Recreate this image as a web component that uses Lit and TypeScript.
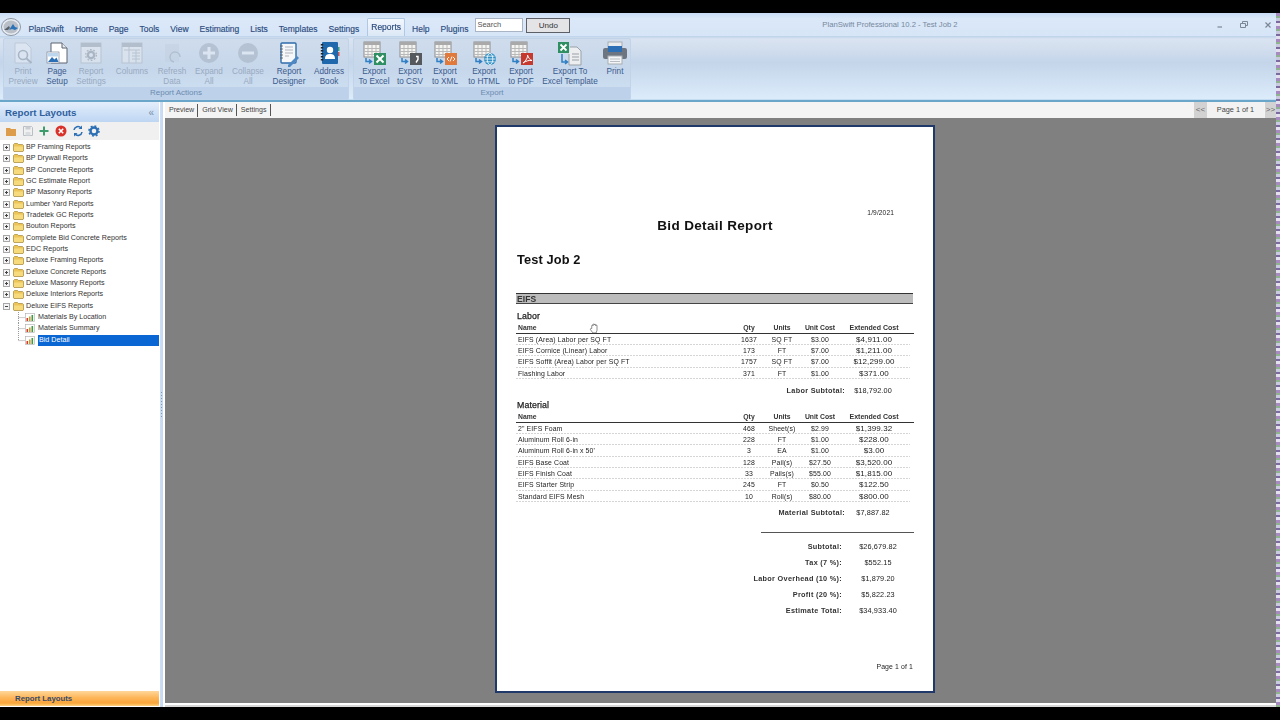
import { LitElement, html, css, svg } from "lit";
import { customElement } from "lit/decorators.js";

const grid = svg`<rect x="3" y="1" width="16" height="15" fill="#f4f4f2" stroke="#8e8e8e"/><rect x="3" y="1" width="16" height="3" fill="#a9a9a9"/><path d="M3 7.5h16M3 10.5h16M3 13.5h16M7 4v12M11 4v12M15 4v12" stroke="#b9b9b9" fill="none"/><path d="M5 17v3.5h5M8 18.5l2.5 2-2.5 2" stroke="#2f7fc4" stroke-width="1.5" fill="none"/>`;
const exportIcon = (badge: unknown) => html`<svg viewBox="0 0 26 26" width="26" height="26">${grid}${badge}</svg>`;
const ICONS: Record<string, unknown> = {
  preview: html`<svg viewBox="0 0 26 26" width="26" height="26"><g opacity=".45"><path d="M5 2h11l5 5v15H5z" fill="#eef2f8" stroke="#aab4c2"/><circle cx="13" cy="14" r="4.5" fill="none" stroke="#7d8a9a" stroke-width="1.6"/><path d="M16.5 17.5l5 4.5" stroke="#7d8a9a" stroke-width="2"/></g></svg>`,
  setup: html`<svg viewBox="0 0 26 26" width="26" height="26"><path d="M7 2h11l5 5v15H7z" fill="#fff" stroke="#5d6470"/><path d="M18 2v5h5" fill="#e6e9ed" stroke="#5d6470"/><rect x="3" y="11" width="12" height="11" fill="#fff" stroke="#7b8798" stroke-width=".7"/><path d="M4 21l4-5 2.500 2.500 2-2 2 4.500z" fill="#2a6fb5"/><rect x="4" y="12" width="10" height="3.500" fill="#bcd6ee"/></svg>`,
  rsettings: html`<svg viewBox="0 0 26 26" width="26" height="26"><g opacity=".5"><rect x="3" y="2" width="20" height="20" fill="#e7ebf0" stroke="#a7afb9"/><rect x="3" y="2" width="20" height="4" fill="#9aa3ae"/><circle cx="13" cy="14" r="3.2" fill="none" stroke="#8b939e" stroke-width="2.4"/><circle cx="13" cy="14" r="5.4" fill="none" stroke="#8b939e" stroke-width="1.2" stroke-dasharray="1.7 1.7"/></g></svg>`,
  columns: html`<svg viewBox="0 0 26 26" width="26" height="26"><g opacity=".5"><rect x="3" y="2" width="20" height="20" fill="#e7ebf0" stroke="#a7afb9"/><rect x="3" y="2" width="20" height="4" fill="#9aa3ae"/><path d="M10 6v16M5 9h16M13 12h8M13 15h8M13 18h8M17 9v13" stroke="#a7afb9" fill="none"/></g></svg>`,
  refresh: html`<svg viewBox="0 0 26 26" width="26" height="26"><g opacity=".28"><rect x="6" y="3" width="14" height="18" fill="#bcc8d8"/><path d="M15 21a5 5 0 1 1 6-5" fill="none" stroke="#6f8296" stroke-width="1.5"/></g></svg>`,
  expand: html`<svg viewBox="0 0 26 26" width="26" height="26"><circle cx="13" cy="12" r="10" fill="#aebccd" opacity=".8"/><path d="M13 6v12M7 12h12" stroke="#dbe5f1" stroke-width="3"/></svg>`,
  collapse: html`<svg viewBox="0 0 26 26" width="26" height="26"><circle cx="13" cy="12" r="10" fill="#aebccd" opacity=".8"/><path d="M7 12h12" stroke="#dbe5f1" stroke-width="3"/></svg>`,
  designer: html`<svg viewBox="0 0 26 26" width="26" height="26"><rect x="5" y="2" width="15" height="20" rx="1" fill="#f6f7f9" stroke="#2f6cab" stroke-width="1.400"/><path d="M4 5h3M4 8h3M4 11h3M4 14h3M4 17h3" stroke="#555" stroke-width=".8"/><path d="M9 6h8M9 9h8M9 12h8M9 15h4" stroke="#aeb6c0" stroke-width="1.200"/><path d="M12 24l9-9 2 2-9 9h-2z" fill="#4c87c4"/></svg>`,
  address: html`<svg viewBox="0 0 26 26" width="26" height="26"><rect x="6" y="1" width="16" height="22" rx="1" fill="#1f68ac"/><path d="M6 3v18" stroke="#222" stroke-width="2.400" stroke-dasharray="1.500 1.500"/><circle cx="14" cy="9" r="3.200" fill="#fff"/><path d="M9 18c0-4 2-5 5-5s5 1 5 5z" fill="#fff"/><rect x="22" y="6" width="1.500" height="4" fill="#3aa07a"/><rect x="22" y="11" width="1.500" height="4" fill="#c55"/></svg>`,
  excel: exportIcon(svg`<rect x="13" y="12" width="12" height="12" fill="#2f8f63"/><path d="M15.5 14.5l7 7M22.5 14.5l-7 7" stroke="#fff" stroke-width="2"/>`),
  csv: exportIcon(svg`<rect x="13" y="12" width="12" height="12" fill="#55585c"/><path d="M19 15.5h2v3l-2 3" stroke="#fff" stroke-width="1.4" fill="none"/>`),
  xml: exportIcon(svg`<rect x="13" y="12" width="12" height="12" fill="#e07a3c"/><path d="M17 16l-2 2 2 2M21 16l2 2-2 2M20 15.5l-2 5" stroke="#fff" stroke-width=".9" fill="none"/>`),
  htmlx: exportIcon(svg`<circle cx="19" cy="18" r="6" fill="#2f8fc4"/><ellipse cx="19" cy="18" rx="2.8" ry="5.6" fill="none" stroke="#fff" stroke-width=".8"/><path d="M13.5 18h11M14.5 15.2h9M14.5 20.8h9" stroke="#fff" stroke-width=".8"/>`),
  pdf: exportIcon(svg`<rect x="13" y="12" width="12" height="12" fill="#c5392e"/><path d="M15 22c3-2 5-6 4.5-8 1 3 2.500 5 4.500 5.500-3-.5-6 .5-9 2.500z" fill="none" stroke="#fff" stroke-width="1"/>`),
  template: html`<svg viewBox="0 0 26 26" width="26" height="26"><rect x="1" y="1" width="11" height="11" fill="#2f8f63"/><path d="M3.500 3.500l6 6M9.500 3.500l-6 6" stroke="#fff" stroke-width="1.800"/><path d="M13 6h7l4 4v14H12V13" fill="#eceef0" stroke="#9aa1a9"/><path d="M15 13h7M15 16h7M15 19h7" stroke="#9aa1a9"/><path d="M5 13v8h5M8 19l2.500 2L8 23" stroke="#2f7fc4" stroke-width="1.500" fill="none"/></svg>`,
  print: html`<svg viewBox="0 0 26 26" width="26" height="26"><rect x="6" y="1" width="14" height="7" fill="#e9ecef" stroke="#a8adb3"/><rect x="1" y="7" width="24" height="11" rx="2" fill="#6d7680"/><rect x="6" y="5" width="14" height="6" fill="#2d6fb4"/><rect x="6" y="15" width="14" height="8" fill="#f4f5f6" stroke="#a8adb3"/><path d="M8 18h10M8 20.500h10" stroke="#b7bcc2"/></svg>`,
};

type Btn = { a: string; b?: string; i: string; w: number; off?: boolean };
const ACTIONS: Btn[] = [
  { a: "Print", b: "Preview", i: "preview", w: 36, off: true },
  { a: "Page", b: "Setup", i: "setup", w: 32 },
  { a: "Report", b: "Settings", i: "rsettings", w: 36, off: true },
  { a: "Columns", i: "columns", w: 46, off: true },
  { a: "Refresh", b: "Data", i: "refresh", w: 34, off: true },
  { a: "Expand", b: "All", i: "expand", w: 40, off: true },
  { a: "Collapse", b: "All", i: "collapse", w: 38, off: true },
  { a: "Report", b: "Designer", i: "designer", w: 44 },
  { a: "Address", b: "Book", i: "address", w: 36 },
];
const EXPORTS: Btn[] = [
  { a: "Export", b: "To Excel", i: "excel", w: 36 },
  { a: "Export", b: "to CSV", i: "csv", w: 36 },
  { a: "Export", b: "to XML", i: "xml", w: 34 },
  { a: "Export", b: "to HTML", i: "htmlx", w: 44 },
  { a: "Export", b: "to PDF", i: "pdf", w: 30 },
  { a: "Export To", b: "Excel Template", i: "template", w: 68 },
  { a: "Print", i: "print", w: 22 },
];
const TABS = ["Home", "Page", "Tools", "View", "Estimating", "Lists", "Templates", "Settings"];
const FOLDERS = ["BP Framing Reports", "BP Drywall Reports", "BP Concrete Reports", "GC Estimate Report", "BP Masonry Reports", "Lumber Yard Reports", "Tradetek GC Reports", "Bouton Reports", "Complete Bid Concrete Reports", "EDC Reports", "Deluxe Framing Reports", "Deluxe Concrete Reports", "Deluxe Masonry Reports", "Deluxe Interiors Reports"];
const LABOR = [
  ["EIFS (Area) Labor per SQ FT", "1637", "SQ FT", "$3.00", "$4,911.00"],
  ["EIFS Cornice (Linear) Labor", "173", "FT", "$7.00", "$1,211.00"],
  ["EIFS Soffit (Area) Labor per SQ FT", "1757", "SQ FT", "$7.00", "$12,299.00"],
  ["Flashing Labor", "371", "FT", "$1.00", "$371.00"],
];
const MATERIAL = [
  ['2" EIFS Foam', "468", "Sheet(s)", "$2.99", "$1,399.32"],
  ["Aluminum Roll 6-in", "228", "FT", "$1.00", "$228.00"],
  ["Aluminum Roll 6-in x 50'", "3", "EA", "$1.00", "$3.00"],
  ["EIFS Base Coat", "128", "Pail(s)", "$27.50", "$3,520.00"],
  ["EIFS Finish Coat", "33", "Pails(s)", "$55.00", "$1,815.00"],
  ["EIFS Starter Strip", "245", "FT", "$0.50", "$122.50"],
  ["Standard EIFS Mesh", "10", "Roll(s)", "$80.00", "$800.00"],
];
const SUMMARY = [
  ["Subtotal:", "$26,679.82"],
  ["Tax (7 %):", "$552.15"],
  ["Labor Overhead (10 %):", "$1,879.20"],
  ["Profit (20 %):", "$5,822.23"],
  ["Estimate Total:", "$34,933.40"],
];

@customElement("app-root")
export class AppRoot extends LitElement {
  static styles = css`
    :host { display: block; width: 1280px; height: 720px; background: #000; overflow: hidden; font-family: "Liberation Sans", Arial, sans-serif; }
    .screen { display: flex; height: 694px; padding-top: 13px; box-sizing: content-box; filter: blur(.3px); }
    .win { width: 1276px; display: flex; flex-direction: column; background: #d6e4f5; }
    .noise { width: 4px; background: repeating-linear-gradient(180deg, #a78ac0 0 3px, #8fb38f 3px 5px, #c9c9e0 5px 8px, #7a6aa0 8px 10px, #e5e0f0 10px 13px); }
    .title { height: 23px; display: flex; align-items: flex-end; background: linear-gradient(#c9dcf4, #dbe8f8 25%, #d6e5f7); flex: none; }
    .left { width: 570px; display: flex; align-items: flex-end; flex: none; height: 23px; }
    .logo { width: 20px; height: 18px; margin: 0 0 0 1px; flex: none; align-self: flex-end; }
    .tabs { display: flex; align-items: flex-end; gap: 11px; margin-left: 7.500px; color: #2b4a7d; font-size: 8.500px; line-height: 11px; padding-bottom: 1px; flex: none; white-space: nowrap; }
    .tabs b { font-weight: normal; -webkit-text-stroke: .15px #2b4a7d; }
    .tab-on { margin: 0 -4px 0 -3px; height: 17px; padding: 0 3px; background: linear-gradient(#f2f7fd, #dce8f6); border: 1px solid #afc8e4; border-bottom: 0; border-radius: 2px 2px 0 0; position: relative; top: 1px; display: flex; align-items: center; }
    .search { width: 45px; height: 12px; margin: 0 3px 4px 7px; background: #fff; border: 1px solid #a9b4c4; font-size: 7.500px; line-height: 12px; color: #555; padding-left: 1px; flex: none; }
    .undo { width: 42px; height: 13px; margin-bottom: 3px; background: #e4e4e6; border: 1px solid #5d6066; font-size: 8px; line-height: 13px; text-align: center; color: #333; flex: none; }
    .ttl { flex: 1; text-align: center; font-size: 7.700px; line-height: 22px; color: #76879e; align-self: center; }
    .ctl { width: 66px; flex: none; display: flex; align-items: center; justify-content: space-between; height: 22px; padding: 0 4px 0 6px; box-sizing: border-box; }
    .ribbon { height: 66px; flex: none; padding: 2px 3px 0; box-sizing: border-box; display: flex; gap: 4px; background: linear-gradient(#bcd3e9 0, #d9e3f1 3px, #d5e0ef 10px, #c4d5ea 40%, #dcecfb 96%, #6aa6c9 97%, #6aa6c9 100%); }
    .group { height: 62px; display: flex; flex-direction: column; background: linear-gradient(#cfdcec, #c6d7eb 50%, #cfe1f3); border: 1px solid #c1d3e8; border-radius: 2px; box-sizing: border-box; }
    .g1 { width: 346px; }
    .g2 { width: 278px; }
    .btns { flex: 1; display: flex; padding-left: 1px; }
    .g2 .btns { padding-left: 2px; }
    .btn { display: flex; flex-direction: column; align-items: center; color: #3b5a8c; font-size: 8.200px; line-height: 10px; text-align: center; white-space: nowrap; flex: none; padding-top: 2px; }
    .btn svg { display: block; }
    .btn.off { color: #98a9bf; }
    .glabel { height: 12px; flex: none; background: #bdd2ea; color: #6c8ab0; font-size: 8px; line-height: 12px; text-align: center; }
    .body { flex: 1; display: flex; min-height: 0; background: #fff; }
    .side { width: 159px; flex: none; display: flex; flex-direction: column; background: #fff; }
    .shead { height: 20px; flex: none; display: flex; align-items: center; justify-content: space-between; padding: 0 5px; background: linear-gradient(#e3eefb, #bed6f3); color: #2f5f9e; font-weight: bold; font-size: 9.750px; }
    .shead span { color: #7a8ea8; font-weight: normal; font-size: 10px; }
    .tools { height: 18px; flex: none; background: #f0f0f0; display: flex; align-items: center; gap: 4.700px; padding-left: 5px; }
    .tools svg { display: block; flex: none; }
    .tree { flex: 1; padding-top: 2px; font-size: 7.150px; color: #333; }
    .node { height: 11.330px; line-height: 11.330px; display: flex; align-items: center; white-space: nowrap; }
    .pm { width: 7px; height: 7px; margin-left: 3px; flex: none; display: block; }
    .fold { width: 11px; height: 9px; margin: 0 2.500px; flex: none; display: block; }
    .leaf { padding-left: 6px; }
    .conn { width: 19px; height: 100%; flex: none; display: block; }
    .doc { width: 10px; height: 9px; margin: 0 3px 0 0; flex: none; display: block; }
    .sel-t { background: #0a66d2; color: #fff; flex: 1; height: 11px; line-height: 11px; padding-left: 1px; }
    .sfoot { height: 15px; flex: none; background: linear-gradient(#ffd79a, #fdb659 45%, #f9a53a 80%, #ffd27e); color: #374a6a; font-size: 7.800px; font-weight: bold; line-height: 15px; padding-left: 15px; margin-bottom: 1px; }
    .split { width: 6px; flex: none; display: flex; align-items: center; justify-content: center; background: linear-gradient(90deg, #fff 0, #fff 1px, #cfe0f5 1px, #c4d8f2 4px, #fff 4px); }
    .grip { width: 1px; height: 26px; margin: 0 2px 0 0; background: repeating-linear-gradient(180deg, #8298b5 0 1px, transparent 1px 3px); }
    .main { flex: 1; min-width: 0; display: flex; flex-direction: column; background: #f3f3f3; }
    .mtabs { height: 16px; flex: none; display: flex; align-items: center; background: #f4f4f4; font-size: 7.100px; color: #444; padding-left: 4px; }
    .mtabs span { padding: 0 3px 0 2px; border-right: 1px solid #555; line-height: 12px; margin-right: 2px; }
    .mtabs span:first-child { padding: 0 3px 1px 0; }
    .pager { margin-left: auto; display: flex; height: 16px; line-height: 16px; font-size: 7.300px; color: #444; text-align: center; }
    .pbtn { width: 13px; background: #d2d2d2; color: #666; font-size: 8px; }
    .pmid { width: 57px; background: #f2f2f2; margin-right: 1px; }
    .pager .last { width: 11px; white-space: nowrap; overflow: hidden; }
    .canvas { height: 585px; flex: none; background: #808080; padding: 7px 0 0 330px; box-sizing: border-box; }
    .paper { width: 440px; height: 568px; box-sizing: border-box; background: #fff; border: 2px solid #1f3a6a; padding: 81px 0 0 19px; position: relative; color: #222; font-size: 6.900px; letter-spacing: .12px; }
    .date { height: 10px; line-height: 10px; text-align: right; width: 378px; font-size: 6.600px; }
    .h1 { height: 16px; line-height: 16px; font-size: 13.500px; font-weight: bold; letter-spacing: .35px; text-align: center; color: #111; width: 398px; }
    .h2 { height: 16px; line-height: 16px; font-size: 12.800px; font-weight: bold; margin: 17.500px 0 0 1px; color: #111; }
    .wrap { width: 398px; }
    .band { height: 11px; margin-top: 25.500px; box-sizing: border-box; width: 397px; background: #bcbcbc; border-top: 1px solid #333; border-bottom: 1px solid #444; font-weight: bold; font-size: 8.500px; line-height: 10px; padding-left: 1px; color: #333; }
    .sec { height: 12px; line-height: 12px; font-size: 8.800px; padding-left: 1px; color: #222; letter-spacing: .1px; -webkit-text-stroke: .25px #222; }
    .s1 { margin-top: 6px; }
    .s2 { margin-top: 2px; }
    .row { display: grid; grid-template-columns: 216px 34px 32px 44px 64px; height: 11.330px; line-height: 11px; width: 394px; box-sizing: border-box; background-image: linear-gradient(90deg, #aaa 50%, transparent 50%); background-size: 3px 1px; background-repeat: repeat-x; background-position: bottom; }
    .row > span { text-align: center; white-space: nowrap; }
    .row > span:first-child { text-align: left; padding-left: 2px; }
    .row > span:last-child { font-size: 8px; }
    .head { width: 398px; background: none; border-bottom: 1px solid #333; height: 11.700px; font-weight: bold; letter-spacing: 0; font-size: 6.800px; color: #333; }
    .head > span:last-child { font-size: 7px; }
    .sub { display: grid; grid-template-columns: 329px 56px; height: 12px; line-height: 12px; font-size: 7.300px; }
    .sub b { text-align: right; letter-spacing: .3px; color: #333; }
    .sub span { text-align: center; }
    .m1 { margin-top: 6px; }
    .m2 { margin-top: 5.400px; }
    .rule { margin: 13px 0 0 245px; width: 153px; height: 1px; background: #555; }
    .summary { margin-top: 6px; }
    .sumrow { display: grid; grid-template-columns: 326px 72px; height: 16px; line-height: 16px; font-size: 7.300px; }
    .sumrow b { text-align: right; letter-spacing: .3px; color: #333; }
    .sumrow span { text-align: center; }
    .pg { margin-top: 43px; width: 397px; text-align: right; line-height: 10px; height: 10px; }
    .hand { position: absolute; left: 91.500px; top: 196px; width: 11px; height: 11px; }
    .foot { flex: 1; background: #fff; border-bottom: 2px solid #d8d8d8; box-sizing: border-box; }
  `;

  private row(r: string[], head = false) {
    return html`<div class="row ${head ? "head" : ""}">${r.map((c) => html`<span>${c}</span>`)}</div>`;
  }

  private toolIcons() {
    return html`
      <svg viewBox="0 0 12 12" width="12" height="12"><path d="M1 3h4l1 1h5v7H1z" fill="#dd9c4a"/></svg>
      <svg viewBox="0 0 12 12" width="12" height="12"><path d="M1.500 1.500h8l1 1v8h-9z" fill="none" stroke="#b9bec4"/><rect x="3.500" y="1.500" width="5" height="3" fill="#c9ced4"/><rect x="3.500" y="7" width="5" height="3.500" fill="#d9dde1"/></svg>
      <svg viewBox="0 0 12 12" width="12" height="12"><path d="M6 1.500v9M1.500 6h9" stroke="#3d9b6c" stroke-width="2"/></svg>
      <svg viewBox="0 0 12 12" width="12" height="12"><circle cx="6" cy="6" r="5.500" fill="#d8322a"/><path d="M3.800 3.800l4.400 4.400M8.200 3.800l-4.400 4.400" stroke="#fff" stroke-width="1.600"/></svg>
      <svg viewBox="0 0 12 12" width="12" height="12"><path d="M2 5a4 4 0 0 1 7-2M10 7a4 4 0 0 1-7 2" fill="none" stroke="#2d6fb4" stroke-width="1.600"/><path d="M10 .500v3.500H6.500zM2 11.500V8h3.500z" fill="#2d6fb4"/></svg>
      <svg viewBox="0 0 12 12" width="12" height="12"><circle cx="6" cy="6" r="3.500" fill="none" stroke="#2d6fb4" stroke-width="2.400"/><circle cx="6" cy="6" r="5" fill="none" stroke="#2d6fb4" stroke-width="1.600" stroke-dasharray="1.900 2"/></svg>`;
  }

  private pm(open: boolean) {
    return html`<svg class="pm" viewBox="0 0 7 7"><rect x=".5" y=".5" width="6" height="6" fill="#f4f4f4" stroke="#a8a8a8"/><path d="M2 3.500h3" stroke="#444"/>${open ? "" : svg`<path d="M3.500 2v3" stroke="#444"/>`}</svg>`;
  }
  private folder() {
    return html`<svg class="fold" viewBox="0 0 11 9"><path d="M.5 1.500L1.500.5h3l1 1h4l1 1v5.500l-.500.500H1l-.500-.500z" fill="#ecc458" stroke="#a58a3a" stroke-width=".7"/><path d="M1 3.500h9v4.500H1z" fill="#f7da7c"/></svg>`;
  }
  private leaf(t: string, sel = false, last = false) {
    return html`<div class="node leaf">
      <svg class="conn" viewBox="0 0 19 11.330" preserveAspectRatio="none"><path d="M12.500 0V${last ? "5.600" : "11.330"}M12.500 5.600H19" stroke="#999" stroke-dasharray="1 1" fill="none"/></svg>
      <svg class="doc" viewBox="0 0 10 9"><rect x=".5" y=".5" width="9" height="8" fill="#fff" stroke="#aaa" stroke-width=".6"/><rect x="1.500" y="5" width="1.600" height="3" fill="#d23a2a"/><rect x="4" y="3.500" width="1.600" height="4.500" fill="#d99a2a"/><rect x="6.500" y="2" width="1.600" height="6" fill="#3a9b46"/></svg>
      ${sel ? html`<span class="sel-t">${t}</span>` : html`<span>${t}</span>`}
    </div>`;
  }

  render() {
    const btn = (b: Btn) => html`<div class="btn ${b.off ? "off" : ""}" style="width:${b.w}px">${ICONS[b.i]}<span>${b.a}</span>${b.b ? html`<span>${b.b}</span>` : ""}</div>`;
    return html`
      <div class="screen">
        <div class="win">
          <div class="title">
            <div class="left">
              <svg class="logo" viewBox="0 0 20 18"><ellipse cx="10" cy="9" rx="9.500" ry="8.500" fill="#e9edf2" stroke="#8a96a5"/><ellipse cx="10" cy="9" rx="7.500" ry="6.500" fill="#b9bfc8"/><path d="M8 12l4-6 2 3 3 1-3 2-3-1z" fill="#2a72b8"/><path d="M3 12l5-4 1 2-2 2z" fill="#5a6068"/></svg>
              <div class="tabs"><b>PlanSwift</b>${TABS.map((t) => html`<b>${t}</b>`)}<b class="tab-on">Reports</b><b>Help</b><b>Plugins</b></div>
              <div class="search">Search</div>
              <div class="undo">Undo</div>
            </div>
            <div class="ttl">PlanSwift Professional 10.2 - Test Job 2</div>
            <div class="ctl">
              <svg viewBox="0 0 8 8" width="8" height="8"><path d="M1.500 6h4.500" stroke="#7b8797" stroke-width="1.200"/></svg>
              <svg viewBox="0 0 8 8" width="8" height="8"><path d="M.5 2.500h5v4h-5zM2.500 2.500v-2h5v4h-2" fill="none" stroke="#7b8797"/></svg>
              <svg viewBox="0 0 8 8" width="8" height="8"><path d="M1.500 1.500l5 5M6.500 1.500l-5 5" stroke="#7b8797" stroke-width="1.200"/></svg>
            </div>
          </div>
          <div class="ribbon">
            <div class="group g1"><div class="btns">${ACTIONS.map(btn)}</div><div class="glabel">Report Actions</div></div>
            <div class="group g2"><div class="btns">${EXPORTS.map(btn)}</div><div class="glabel">Export</div></div>
          </div>
          <div class="body">
            <div class="side">
              <div class="shead">Report Layouts<span>«</span></div>
              <div class="tools">${this.toolIcons()}</div>
              <div class="tree">
                ${FOLDERS.map((f) => html`<div class="node">${this.pm(false)}${this.folder()}<span>${f}</span></div>`)}
                <div class="node">${this.pm(true)}${this.folder()}<span>Deluxe EIFS Reports</span></div>
                ${this.leaf("Materials By Location")}
                ${this.leaf("Materials Summary")}
                ${this.leaf("Bid Detail", true, true)}
              </div>
              <div class="sfoot">Report Layouts</div>
            </div>
            <div class="split"><div class="grip"></div></div>
            <div class="main">
              <div class="mtabs">
                <span>Preview</span><span>Grid View</span><span>Settings</span>
                <div class="pager"><div class="pbtn">&lt;&lt;</div><div class="pmid">Page 1 of 1</div><div class="pbtn last">&gt;&gt;</div></div>
              </div>
              <div class="canvas">
                <div class="paper">
                  <div class="date">1/9/2021</div>
                  <div class="h1">Bid Detail Report</div>
                  <div class="h2">Test Job 2</div>
                  <div class="wrap">
                    <div class="band">EIFS</div>
                    <div class="sec s1">Labor</div>
                    ${this.row(["Name", "Qty", "Units", "Unit Cost", "Extended Cost"], true)}
                    ${LABOR.map((r) => this.row(r))}
                    <div class="sub m1"><b>Labor Subtotal:</b><span>$18,792.00</span></div>
                    <div class="sec s2">Material</div>
                    ${this.row(["Name", "Qty", "Units", "Unit Cost", "Extended Cost"], true)}
                    ${MATERIAL.map((r) => this.row(r))}
                    <div class="sub m2"><b>Material Subtotal:</b><span>$7,887.82</span></div>
                    <div class="rule"></div>
                    <div class="summary">${SUMMARY.map(([a, b]) => html`<div class="sumrow"><b>${a}</b><span>${b}</span></div>`)}</div>
                    <div class="pg">Page 1 of 1</div>
                  </div>
                  <svg class="hand" viewBox="0 0 9 10"><path d="M2 5V2.500a.6.6 0 0 1 1.200 0V1.500a.6.6 0 0 1 1.200 0V1.700a.6.6 0 0 1 1.200 0V2.500a.6.6 0 0 1 1.200 0V6.500L6 9H3L.8 6c-.4-.8.6-1.400 1.200-1z" fill="#fff" stroke="#333" stroke-width=".5"/></svg>
                </div>
              </div>
              <div class="foot"></div>
            </div>
          </div>
        </div>
        <div class="noise"></div>
      </div>
    `;
  }
}
